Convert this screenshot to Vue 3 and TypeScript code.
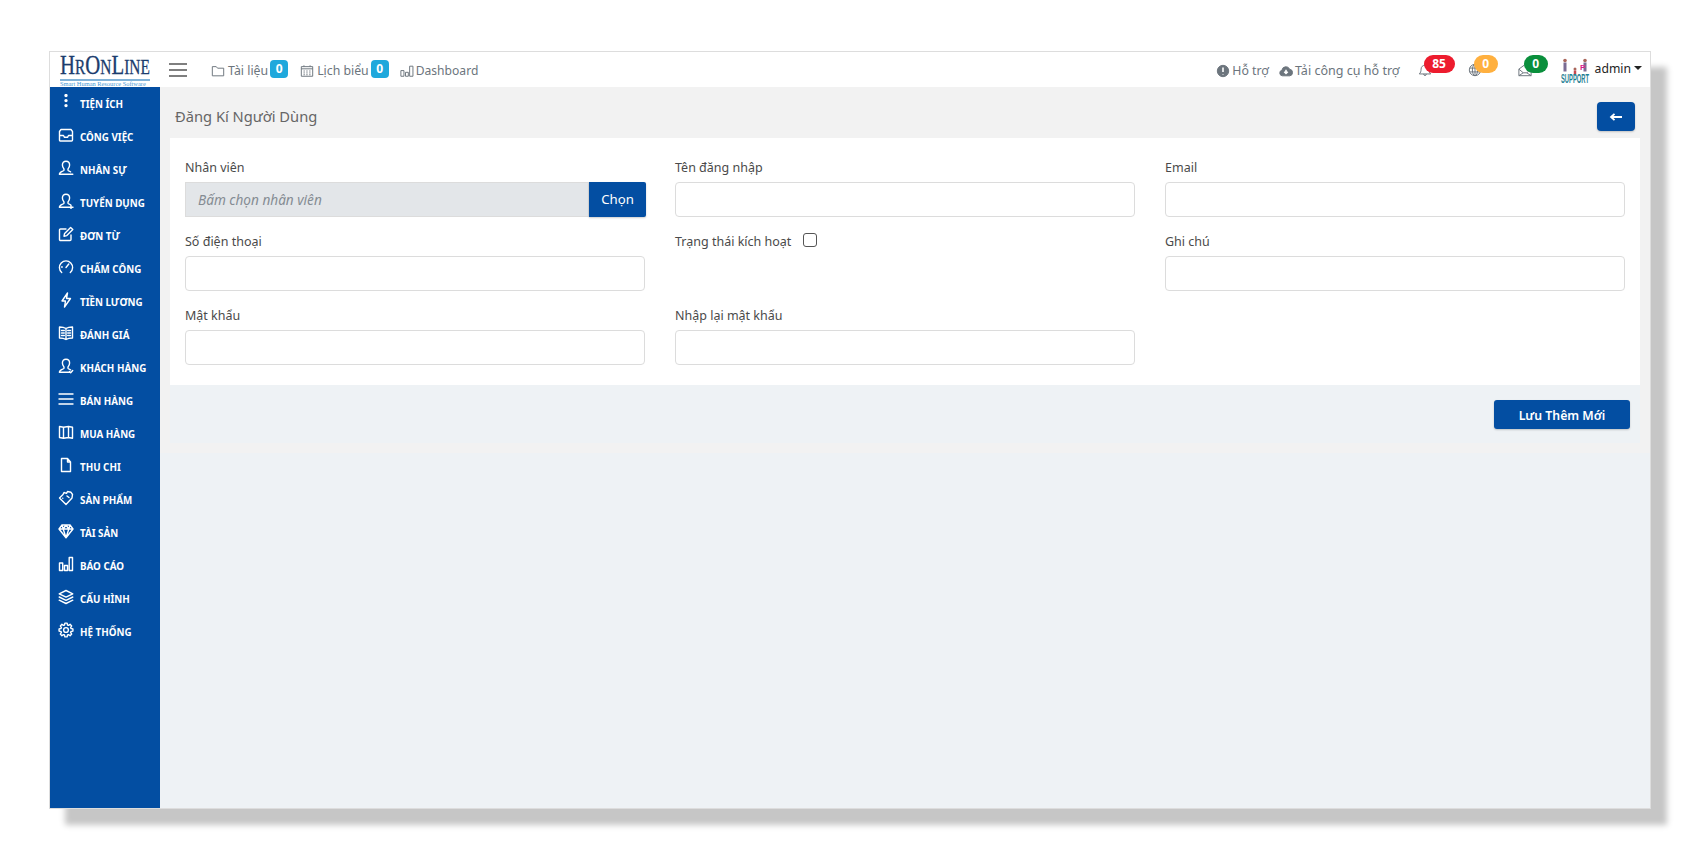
<script setup lang="ts">
interface MenuItem {
  label: string;
  icon: string;
  width?: number;
}

// 8 tooth gear outline for the last sidebar entry
const gearPath = (): string => {
  const pts: string[] = [];
  for (let i = 0; i < 8; i++) {
    const a = (i * Math.PI) / 4;
    const at = (r: number, d: number) => {
      const x = 8 + r * Math.cos(a + d);
      const y = 8 + r * Math.sin(a + d);
      return `${x.toFixed(2)} ${y.toFixed(2)}`;
    };
    pts.push(`${i === 0 ? "M" : "L"}${at(5.2, -0.3)}`, `L${at(7, -0.16)}`, `L${at(7, 0.16)}`, `L${at(5.2, 0.3)}`);
  }
  return pts.join(" ") + "z M10.4 8a2.4 2.4 0 1 1-4.8 0 2.4 2.4 0 1 1 4.8 0z";
};

const person =
  "M8 1.2c-2.3 0-3.6 1.7-3.6 3.9 0 1.7.7 3 1.6 3.9v1.3c0 .9-4.6 1.2-4.6 4h11M8 1.2c2.3 0 3.6 1.7 3.6 3.9 0 1.7-.7 3-1.6 3.9v1.3c0 .5 1.4.8 2.6 1.5";

const menu: MenuItem[] = [
  { label: "TIỆN ÍCH", icon: "M8 1.6v.01M8 6.6v.01M8 11.6v.01", width: 3.4 },
  { label: "CÔNG VIỆC", icon: "M3 2.5h10l1.5 2v8.5a1 1 0 0 1-1 1h-11a1 1 0 0 1-1-1V4.500zM1.500 8.500h4l1 1.800h3l1-1.800h4" },
  { label: "NHÂN SỰ", icon: person + "M12 14.300h2.800" },
  { label: "TUYỂN DỤNG", icon: person + "M11 14.300h4M13 12.300v4" },
  { label: "ĐƠN TỪ", icon: "M13 9v4.500a1 1 0 0 1-1 1H2.500a1 1 0 0 1-1-1V4a1 1 0 0 1 1-1H8M6 10.200l.6-2.800 6-6 2.200 2.200-6 6z" },
  { label: "CHẤM CÔNG", icon: "M3.700 13.500A6.600 6.600 0 1 1 12.300 13.500M8 8.500l2.800-3.500M3.500 8h.8" },
  { label: "TIỀN LƯƠNG", icon: "M9.500 1 4 9h3.500l-1 6 6-8.500H8.500z" },
  { label: "ĐÁNH GIÁ", icon: "M8 3.500C6 2.200 3.500 2 1.500 2v11c2 0 4.500.2 6.500 1.500 2-1.300 4.500-1.500 6.500-1.500V2c-2 0-4.500.2-6.500 1.500zM8 3.500v11M3.500 5.500h2.800M3.500 8h2.800M3.500 10.500h2.800M9.700 5.500h2.800M9.700 8h2.800M9.700 10.500h2.800" },
  { label: "KHÁCH HÀNG", icon: person + "M11.500 13.500l1.200 1.200 2-2.200" },
  { label: "BÁN HÀNG", icon: "M1 3h14M1 8h14M1 13h14" },
  { label: "MUA HÀNG", icon: "M1.500 2.500l4 .8 5-.8 4 .8v11l-4-.8-5 .8-4-.8zM5.500 3.300v11M10.500 2.500v11" },
  { label: "THU CHI", icon: "M3.500 1.500h6l3 3.500v9.500h-9zM9.500 1.500V5h3" },
  { label: "SẢN PHẨM", icon: "M1.500 8 5 4.500l1-2 2.500.8 1-1.800 3.500.8 1.500 2.200-.5 3.500L8 14.500zM4.800 8.300v.01M9 6l2 1.500" },
  { label: "TÀI SẢN", icon: "M4 2h8l3 4-7 8.800L1 6zM1 6h14M5.200 6 8 14.800 10.800 6M4 2l1.200 4L8 2l2.800 4L12 2" },
  { label: "BÁO CÁO", icon: "M1.500 7h3.200v7.500H1.500zM6.500 9.500h3v5h-3zM11.200 1.500h3.300v13h-3.300z" },
  { label: "CẤU HÌNH", icon: "M8 1.500l6.800 3.300L8 8.100 1.200 4.800zM1.200 8 8 11.300 14.800 8M1.200 11.200 8 14.500l6.800-3.300" },
  { label: "HỆ THỐNG", icon: gearPath() },
];
</script>

<template>
  <div class="screen">
    <div class="frame">
      <header class="topbar">
        <div class="logo">
          <div class="logo-name"><b>H</b>R<b>O</b>N<b>L</b>INE</div>
          <div class="logo-sub">Smart Human Resource Software</div>
        </div>
        <svg class="burger" viewBox="0 0 18 14"><path d="M0 1h18M0 7h18M0 13h18" /></svg>
        <a class="nav-link first">
          <svg class="ico" viewBox="0 0 16 16"><path d="M1.500 13.500V3h4.500l1.500 1.800h7v8.700z" /></svg>Tài liệu<span class="count">0</span>
        </a>
        <a class="nav-link">
          <svg class="ico" viewBox="0 0 16 16"><path d="M1.500 3h13v11h-13zM4.500 1.500V3M11.500 1.500V3M1.500 5.500h13M4 8h1.500M7.200 8h1.500M10.500 8h1.500M4 10.200h1.500M7.200 10.200h1.500M10.500 10.200h1.500M4 12.300h1.500M7.200 12.300h1.500M10.500 12.300h1.500" /></svg>Lịch biểu<span class="count">0</span>
        </a>
        <a class="nav-link dash">
          <svg class="ico" viewBox="0 0 16 16"><path d="M1 7.500h3.500v6.500H1zM6.300 9.500h3.200V14H6.300zM11 2.500h3.800V14H11z" /></svg>Dashboard
        </a>

        <div class="top-right">
          <a class="nav-link">
            <svg class="ico solid" viewBox="0 0 16 16"><circle cx="8" cy="8" r="6.500" /><path class="cut" d="M8 4v5M8 11.300v.6" /></svg>Hỗ trợ
          </a>
          <a class="nav-link tool">
            <svg class="ico solid" viewBox="0 0 16 16"><path d="M4 13.500a3.300 3.300 0 0 1-.6-6.500 4.600 4.600 0 0 1 8.800-1 3.800 3.800 0 0 1 .2 7.500z" /><path class="cut" d="M8 6.500v4M6 8.800l2 2 2-2" /></svg>Tải công cụ hỗ trợ
          </a>
          <span class="alert bell">
            <svg class="ico" viewBox="0 0 16 16"><path d="M1.500 12.500c1.500-1.500 2-3 2-5.500 0-2.500 2-4.500 4.500-4.500s4.500 2 4.500 4.500c0 2.500.5 4 2 5.500zM6.500 12.500a1.500 1.800 0 0 0 3 0M8 1v1.500" /></svg>
            <span class="pill red">85</span>
          </span>
          <span class="alert globe">
            <svg class="ico" viewBox="0 0 16 16"><circle cx="8" cy="8" r="6.500" /><ellipse cx="8" cy="8" rx="3" ry="6.500" /><path d="M8 1.500v13M2 5.800h12M2 10.200h12" /></svg>
            <span class="pill orange">0</span>
          </span>
          <span class="alert mail">
            <svg class="ico" viewBox="0 0 16 16"><path d="M1 7 8 1.800 15 7v7.500H1zM1 7l5 4.200h4L15 7M1 14.500l5-3.300M15 14.500l-5-3.300" /></svg>
            <span class="pill green">0</span>
          </span>
          <svg class="support" viewBox="0 0 30 27">
            <g fill="#a9655a">
              <circle cx="5" cy="2.500" r="1.800" /><circle cx="25" cy="2.500" r="1.800" /><circle cx="15" cy="11" r="1.500" />
            </g>
            <path d="M5 4.500v9M25 4.500v9" stroke="#7a6c94" stroke-width="3" />
            <path d="M15 12.500v4" stroke="#c7494f" stroke-width="2.500" />
            <text x="20" y="12" class="sup-p">P</text>
            <text x="15" y="25" class="sup-t" textLength="28" lengthAdjust="spacingAndGlyphs">SUPPORT</text>
          </svg>
          <span class="user">admin<i class="caret"></i></span>
        </div>
      </header>

      <div class="body">
        <aside class="sidebar">
          <a v-for="item in menu" :key="item.label" class="menu-item">
            <svg class="menu-ico" viewBox="0 0 16 16"><path :d="item.icon" :stroke-width="item.width || 1.400" /></svg>
            <span>{{ item.label }}</span>
          </a>
        </aside>

        <main class="main">
          <div class="page">
            <div class="title-row">
              <h1>Đăng Kí Người Dùng</h1>
              <button class="btn back" type="button">
                <svg viewBox="0 0 14 10"><path d="M13 5H3M5.500 1.800 2 5l3.500 3.200" /></svg>
              </button>
            </div>

            <section class="card">
              <div class="form-group">
                <label>Nhân viên</label>
                <div class="input-group">
                  <input class="control readonly" placeholder="Bấm chọn nhân viên" readonly />
                  <button class="btn pick" type="button">Chọn</button>
                </div>
              </div>
              <div class="form-group">
                <label>Tên đăng nhập</label>
                <input class="control" />
              </div>
              <div class="form-group">
                <label>Email</label>
                <input class="control" />
              </div>

              <div class="form-group">
                <label>Số điện thoại</label>
                <input class="control" />
              </div>
              <div class="form-group">
                <label>Trạng thái kích hoạt <input class="check" type="checkbox" /></label>
              </div>
              <div class="form-group">
                <label>Ghi chú</label>
                <input class="control" />
              </div>

              <div class="form-group">
                <label>Mật khẩu</label>
                <input class="control" type="password" />
              </div>
              <div class="form-group">
                <label>Nhập lại mật khẩu</label>
                <input class="control" type="password" />
              </div>
            </section>

            <div class="actions">
              <button class="btn save" type="button">Lưu Thêm Mới</button>
            </div>
          </div>
        </main>
      </div>
    </div>
  </div>
</template>

<style scoped>
.screen {
  box-sizing: border-box;
  height: 860px;
  padding: 51px 0 0 49px;
  background: #fff;
  overflow: hidden;
}
.frame {
  box-sizing: border-box;
  width: 1602px;
  height: 758px;
  border: 1px solid #ddd;
  box-shadow: 16px 16px 6px #c6c6c6;
  display: flex;
  flex-direction: column;
  font-family: "Noto Sans", "Open Sans", sans-serif;
  font-size: 12.500px;
  color: #4a4a4a;
  background: #eef2f5;
}

.topbar {
  height: 35px;
  flex: none;
  display: flex;
  align-items: center;
  background: #fff;
}
.logo {
  width: 110px;
  flex: none;
  margin-top: 2px;
  padding-left: 10px;
  box-sizing: border-box;
  color: #1c3d6e;
  font-family: "Liberation Serif", serif;
}
.logo-name {
  width: 124px;
  font-size: 20px;
  line-height: 23px;
  white-space: nowrap;
  -webkit-text-stroke: 0.3px #1c3d6e;
  transform: scaleX(0.77);
  transform-origin: left center;
}
.logo-name b {
  font-size: 27px;
  font-weight: 400;
}
.logo-sub {
  border-top: 2px solid #7fb2d8;
  margin-right: 10px;
  font-size: 6.400px;
  line-height: 6px;
  color: #4a9ad6;
  white-space: nowrap;
}
.burger {
  width: 18px;
  height: 14px;
  flex: none;
  margin-left: 9px;
}
.burger path {
  fill: none;
  stroke: #555;
  stroke-width: 1.500;
}

.nav-link {
  display: flex;
  align-items: center;
  margin: 2px 0 0 12px;
  color: #6c757d;
  font-size: 12.300px;
  white-space: nowrap;
}
.nav-link.first {
  margin-left: 24px;
}
.nav-link.dash {
  margin-left: 11px;
  font-size: 12.100px;
}
.dash .ico,
.top-right .ico {
  margin-right: 2px;
}
.ico {
  width: 14px;
  height: 14px;
  margin-right: 3px;
  flex: none;
}
.ico path,
.ico circle,
.ico ellipse {
  fill: none;
  stroke: #6c757d;
  stroke-width: 1.100;
}
.ico.solid path,
.ico.solid circle {
  fill: #6c757d;
}
.ico.solid path.cut {
  fill: none;
  stroke: #fff;
  stroke-width: 1.800;
}
.count {
  min-width: 18px;
  height: 18px;
  margin-left: 2px;
  margin-top: -4px;
  border-radius: 4px;
  background: #1fa8dc;
  color: #fff;
  font-size: 12px;
  font-weight: 700;
  line-height: 18px;
  text-align: center;
}

.top-right {
  margin-left: auto;
  display: flex;
  align-items: center;
}
.top-right .nav-link.tool {
  margin-left: 10px;
  font-size: 12.550px;
}
.alert {
  position: relative;
  display: flex;
  align-items: center;
}
.alert .ico {
  margin: 0;
}
.bell {
  margin-left: 18px;
}
.globe {
  margin-left: 36px;
}
.mail {
  margin-left: 36px;
}
.pill {
  position: absolute;
  top: -8px;
  left: 6px;
  height: 18px;
  min-width: 24px;
  padding: 0 4px;
  box-sizing: border-box;
  border-radius: 9px;
  color: #fff;
  font-size: 12px;
  font-weight: 700;
  line-height: 18px;
  text-align: center;
}
.red {
  min-width: 31px;
  background: #ed1c2e;
}
.orange {
  background: #ffb03f;
}
.green {
  background: #0a8f3c;
}
.support {
  width: 30px;
  height: 27px;
  margin-left: 28px;
  margin-top: 4px;
  flex: none;
}
.sup-p {
  font: 700 8px "Liberation Sans", sans-serif;
  fill: #d81b8a;
}
.sup-t {
  font: 700 13px "Liberation Sans", sans-serif;
  fill: #1f7f94;
  text-anchor: middle;
}
.user {
  margin: -3px 8px 0 5px;
  font-size: 12.200px;
  color: #222;
  display: flex;
  align-items: center;
}
.caret {
  margin-left: 3px;
  border-top: 4px solid #222;
  border-left: 4px solid transparent;
  border-right: 4px solid transparent;
}

.body {
  flex: 1;
  display: flex;
  min-height: 0;
}
.sidebar {
  width: 110px;
  flex: none;
  background: #034ea2;
  padding-top: 1px;
}
.menu-item {
  height: 33px;
  box-sizing: border-box;
  padding-left: 8px;
  display: flex;
  align-items: center;
  color: #fff;
  font-size: 9.800px;
  font-weight: 700;
  white-space: nowrap;
}
.menu-ico {
  width: 16px;
  height: 16px;
  margin: -6px 6px 0 0;
  flex: none;
}
.menu-ico path {
  fill: none;
  stroke: #fff;
  stroke-linecap: round;
  stroke-linejoin: round;
}

.main {
  flex: 1;
  min-width: 0;
}
.page {
  height: 366px;
  box-sizing: border-box;
  padding: 0 10px 10px;
  background: #f2f2f2;
}
.title-row {
  height: 51px;
  box-sizing: border-box;
  padding: 8px 5px 0;
  display: flex;
  align-items: center;
  justify-content: space-between;
}
.title-row h1 {
  margin: -2px 0 0;
  font-size: 14.700px;
  font-weight: 400;
  color: #666;
}
.btn {
  border: 0;
  background: #034ea2;
  color: #fff;
  font-family: inherit;
  cursor: pointer;
  box-shadow: 0 1px 2px rgba(0, 0, 0, 0.2);
}
.back {
  width: 38px;
  height: 29px;
  border-radius: 4px;
  display: flex;
  align-items: center;
  justify-content: center;
  padding: 0;
}
.back svg {
  width: 14px;
  height: 10px;
}
.back path {
  fill: none;
  stroke: #fff;
  stroke-width: 1.800;
}

.card {
  height: 247px;
  box-sizing: border-box;
  padding: 20px 15px 0;
  background: #fff;
  display: grid;
  grid-template-columns: repeat(3, 460px);
  column-gap: 30px;
  row-gap: 15px;
  align-content: start;
}
.form-group label {
  display: block;
  height: 24px;
  line-height: 20px;
  font-size: 12.500px;
  color: #4a4a4a;
  white-space: nowrap;
}
.control {
  display: block;
  width: 100%;
  height: 35px;
  box-sizing: border-box;
  padding: 0 12px;
  border: 1px solid #dcdcdc;
  border-radius: 4px;
  background: #fff;
  font-family: inherit;
  font-size: 13px;
  outline: none;
}
.input-group {
  display: flex;
  margin-right: -1px;
}
.readonly {
  flex: 1;
  border-radius: 0;
  background: #e3e6e9;
  font-size: 13.600px;
}
.readonly::placeholder {
  color: #858c93;
  font-style: italic;
  opacity: 1;
}
.pick {
  width: 57px;
  height: 35px;
  flex: none;
  padding: 0 0 2px;
  font-size: 13.200px;
  border-radius: 0 2px 2px 0;
}
.check {
  appearance: none;
  width: 14px;
  height: 14px;
  margin: 0 0 0 8px;
  border: 1px solid #555;
  border-radius: 3px;
  background: #fff;
  vertical-align: -1px;
}
.actions {
  height: 58px;
  box-sizing: border-box;
  padding: 15px 10px 0 0;
  display: flex;
  justify-content: flex-end;
  align-items: flex-start;
  background: #eef2f5;
}
.save {
  width: 136px;
  height: 29px;
  padding: 2px 0 0;
  border-radius: 3px;
  font-size: 12.300px;
  font-weight: 600;
}
</style>
